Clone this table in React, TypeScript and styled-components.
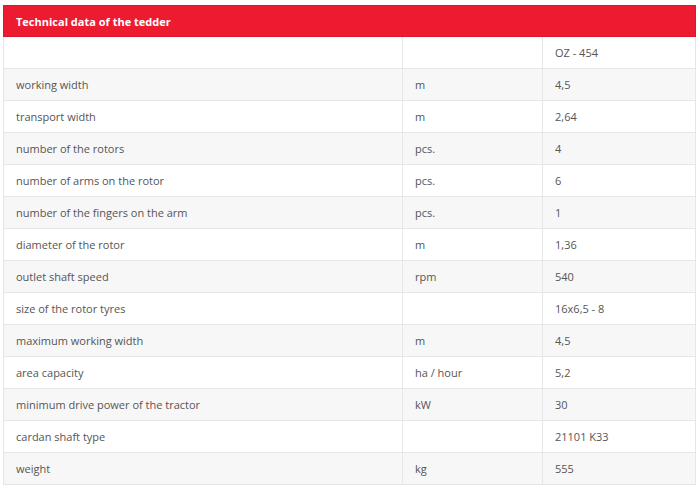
import { createGlobalStyle } from 'styled-components';
import styled from 'styled-components';

const GlobalStyle = createGlobalStyle`
  html, body {
    margin: 0;
    padding: 0;
    background: #ffffff;
  }
  body {
    font-family: "Open Sans", "Noto Sans", sans-serif;
  }
`;

const Page = styled.div`
  padding: 5px 5px 0 3px;
  width: 692px;
`;

const DataTable = styled.table`
  width: 692px;
  border-collapse: collapse;
  table-layout: fixed;
  font-size: 11px;
  color: #555555;
`;

const HeadCell = styled.th`
  background: #ed1b2f;
  color: #ffffff;
  font-weight: 700;
  font-size: 11px;
  text-align: left;
  height: 30px;
  padding: 0 12px;
  border: 1px solid #d9182a;
`;

const Row = styled.tr<{ $striped: boolean }>`
  background: ${({ $striped }) => ($striped ? '#f7f7f7' : '#ffffff')};
`;

const Cell = styled.td`
  height: 31px;
  padding: 0 12px;
  border: 1px solid #e6e6e6;
  vertical-align: middle;
  white-space: nowrap;
`;

const rows: [string, string, string][] = [
  ['', '', 'OZ - 454'],
  ['working width', 'm', '4,5'],
  ['transport width', 'm', '2,64'],
  ['number of the rotors', 'pcs.', '4'],
  ['number of arms on the rotor', 'pcs.', '6'],
  ['number of the fingers on the arm', 'pcs.', '1'],
  ['diameter of the rotor', 'm', '1,36'],
  ['outlet shaft speed', 'rpm', '540'],
  ['size of the rotor tyres', '', '16x6,5 - 8'],
  ['maximum working width', 'm', '4,5'],
  ['area capacity', 'ha / hour', '5,2'],
  ['minimum drive power of the tractor', 'kW', '30'],
  ['cardan shaft type', '', '21101 K33'],
  ['weight', 'kg', '555'],
];

const App = (): JSX.Element => (
  <Page>
    <GlobalStyle />
    <DataTable>
      <colgroup>
        <col style={{ width: 399 }} />
        <col style={{ width: 140 }} />
        <col style={{ width: 153 }} />
      </colgroup>
      <thead>
        <tr>
          <HeadCell colSpan={3}>Technical data of the tedder</HeadCell>
        </tr>
      </thead>
      <tbody>
        {rows.map(([name, unit, value], i) => (
          <Row key={name + i} $striped={i % 2 === 1}>
            <Cell>{name}</Cell>
            <Cell>{unit}</Cell>
            <Cell>{value}</Cell>
          </Row>
        ))}
      </tbody>
    </DataTable>
  </Page>
);

export default App;
